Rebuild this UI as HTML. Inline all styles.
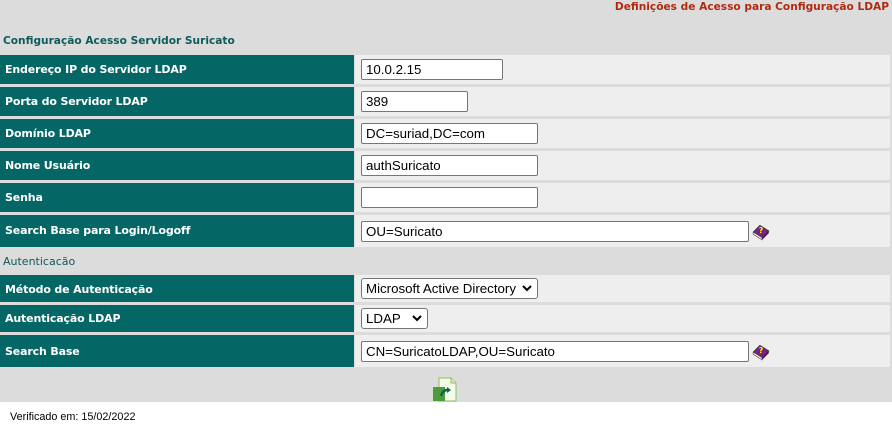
<!DOCTYPE html>
<html><head><meta charset="utf-8"><style>
*{margin:0;padding:0;box-sizing:border-box}
body{width:892px;height:432px;background:#fff;font-family:"DejaVu Sans",Verdana,sans-serif;position:relative;overflow:hidden}
#bg{position:absolute;left:0;top:0;width:892px;height:402px;background:#dcdcdc}
.t{position:absolute;font-weight:bold;font-size:10.6px;white-space:nowrap}
.l{position:absolute;left:0;width:354px;height:29px;background:#056666;color:#fff;font-weight:bold;font-size:11px;padding:8px 0 0 5px;letter-spacing:-0.15px;white-space:nowrap}
.r{position:absolute;left:355px;width:535px;height:29px;background:#eeeeee}
.in{position:absolute;left:6px;top:4px;height:21px;border:1px solid #767676;border-radius:2px;background:#fff;font-family:"Liberation Sans",Arial,sans-serif;font-size:13.3px;padding:2px 0 0 4px;white-space:nowrap;overflow:hidden}
.sel{border-radius:3px}
.sel svg{position:absolute;right:5px;top:6px}
.bk{position:absolute;width:20px;height:20px}
</style></head><body>
<div id="bg"></div>
<div class="t" style="right:3px;top:1px;color:#b02a10">Definições de Acesso para Configuração LDAP</div>
<div class="t" style="left:3px;top:35px;color:#0f5a5a">Configuração Acesso Servidor Suricato</div>

<div class="l" style="top:55px">Endereço IP do Servidor LDAP</div><div class="r" style="top:55px"><div class="in" style="width:142px">10.0.2.15</div></div>
<div class="l" style="top:87px">Porta do Servidor LDAP</div><div class="r" style="top:87px"><div class="in" style="width:107px">389</div></div>
<div class="l" style="top:119px">Domínio LDAP</div><div class="r" style="top:119px"><div class="in" style="width:177px">DC=suriad,DC=com</div></div>
<div class="l" style="top:151px">Nome Usuário</div><div class="r" style="top:151px"><div class="in" style="width:177px">authSuricato</div></div>
<div class="l" style="top:183px">Senha</div><div class="r" style="top:183px"><div class="in" style="width:177px"></div></div>
<div class="l" style="top:215px;height:32px;padding-top:9px">Search Base para Login/Logoff</div><div class="r" style="top:215px;height:32px"><div class="in" style="width:388px;top:6px">OU=Suricato</div>
<svg class="bk" style="left:396px;top:6px" viewBox="0 0 18 18"><path d="M2 10 L10 15 L16 9 L8 4 Z" fill="#7a1f8a" stroke="#333" stroke-width="0.8"/><path d="M2 10 L2 12 L10 17 L10 15 Z" fill="#eee" stroke="#555" stroke-width="0.6"/><path d="M10 15 L10 17 L16 11 L16 9Z" fill="#5a1066"/><text x="7" y="11" font-size="7" fill="#ff0" font-weight="bold">?</text></svg></div>

<div class="t" style="left:3px;top:255px;color:#0f5a5a;font-weight:normal;font-size:11px">Autenticacão</div>
<div class="l" style="top:275px;height:27px">Método de Autenticação</div><div class="r" style="top:275px;height:27px"><div class="in sel" style="width:177px;top:3px">Microsoft Active Directory<svg width="10" height="7" viewBox="0 0 10 7"><path d="M1 1 L5 5 L9 1" stroke="#000" stroke-width="2" fill="none"/></svg></div></div>
<div class="l" style="top:305px;height:27px;padding-top:7px">Autenticação LDAP</div><div class="r" style="top:305px;height:27px"><div class="in sel" style="width:67px;top:3px">LDAP<svg width="10" height="7" viewBox="0 0 10 7"><path d="M1 1 L5 5 L9 1" stroke="#000" stroke-width="2" fill="none"/></svg></div></div>
<div class="l" style="top:335px;height:32px;padding-top:10px">Search Base</div><div class="r" style="top:335px;height:32px"><div class="in" style="width:388px;top:6px">CN=SuricatoLDAP,OU=Suricato</div>
<svg class="bk" style="left:396px;top:6px" viewBox="0 0 18 18"><path d="M2 10 L10 15 L16 9 L8 4 Z" fill="#7a1f8a" stroke="#333" stroke-width="0.8"/><path d="M2 10 L2 12 L10 17 L10 15 Z" fill="#eee" stroke="#555" stroke-width="0.6"/><path d="M10 15 L10 17 L16 11 L16 9Z" fill="#5a1066"/><text x="7" y="11" font-size="7" fill="#ff0" font-weight="bold">?</text></svg></div>

<svg style="position:absolute;left:432px;top:377px" width="26" height="25" viewBox="0 0 26 25"><path d="M7 1 H19 L24 6 V24 H7 Z" fill="#f4fbe8" stroke="#8cc060"/><path d="M19 1 V6 H24" fill="#d8ecc0" stroke="#8cc060"/><rect x="1" y="10" width="12" height="14" fill="#4c9c3c"/><path d="M9 19 Q11 12 17 13" stroke="#136060" stroke-width="2.5" fill="none"/><path d="M15 10 L19 13 L15 16Z" fill="#136060"/></svg>

<div style="position:absolute;left:10px;top:411px;font-family:'Liberation Sans',Arial,sans-serif;font-size:10.8px;color:#000">Verificado em: 15/02/2022</div>
</body></html>
